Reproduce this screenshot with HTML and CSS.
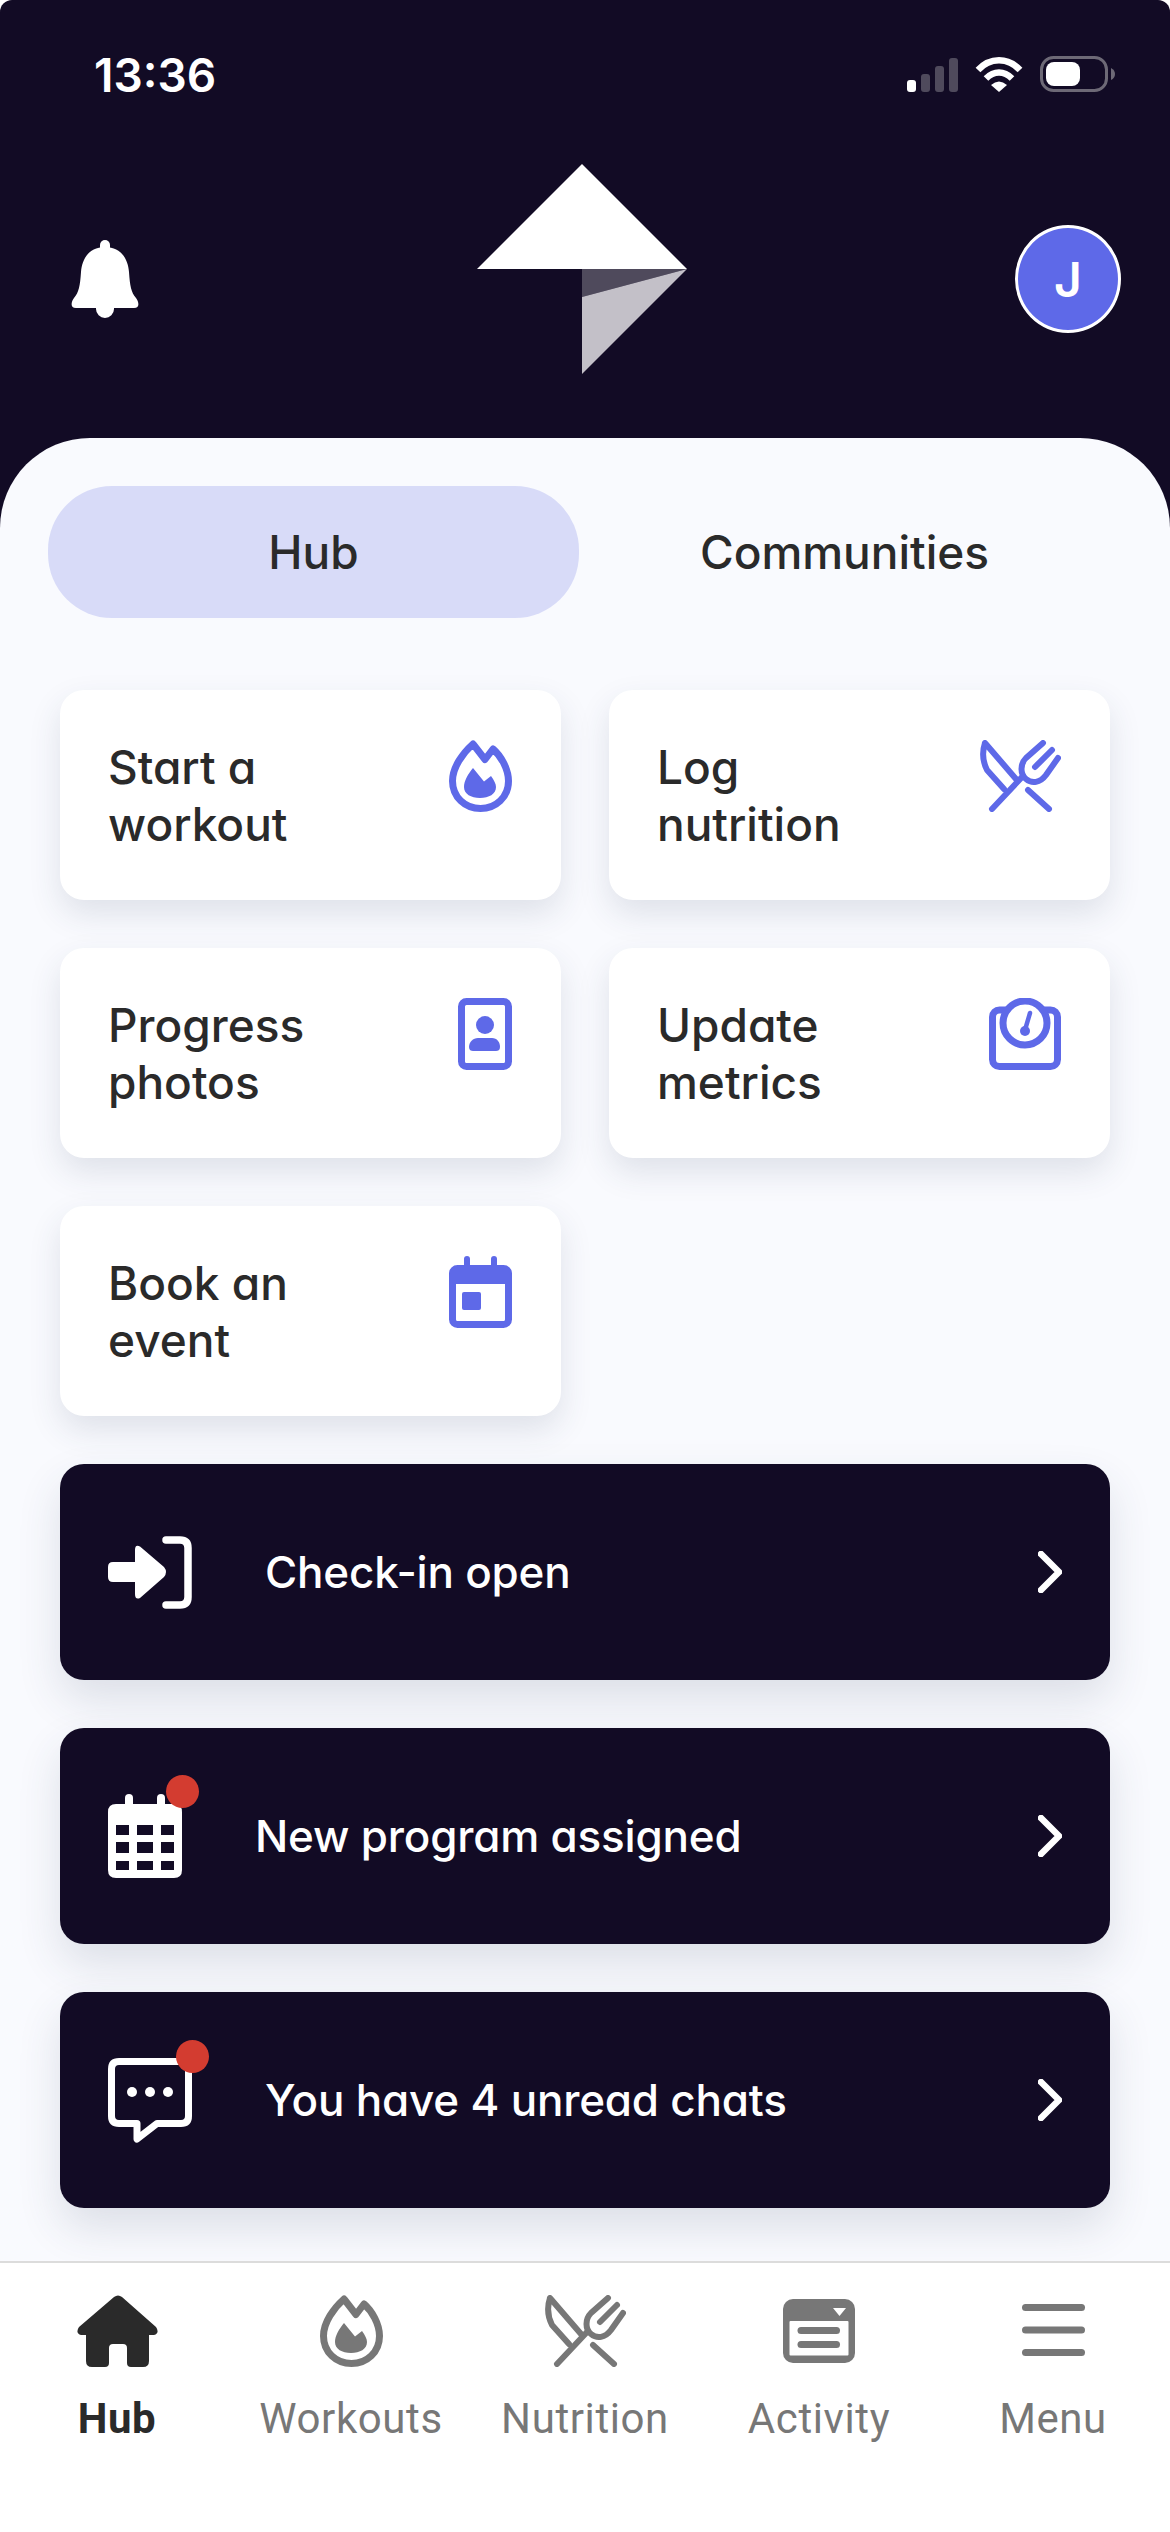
FILE: index.html
```html
<!DOCTYPE html>
<html lang="en">
<head>
<meta charset="utf-8">
<title>Hub</title>
<link rel="stylesheet" href="styles.css">
</head>
<body>
<div class="app">
  <header class="hero">
    <div class="status">
      <span class="time">13:36</span>
      <div class="status-icons">
        <svg width="51" height="34" viewBox="0 0 51 34"><rect y="22" width="9" height="12" rx="3" fill="#fff"/><rect x="14" y="16" width="9" height="18" rx="3" fill="#4f4a5c"/><rect x="28" y="8" width="9" height="26" rx="3" fill="#4f4a5c"/><rect x="42" width="9" height="34" rx="3" fill="#4f4a5c"/></svg>
        <svg width="48" height="36" viewBox="0 0 48 36"><path d="M3 14C15 1 33 1 45 14" fill="none" stroke="#fff" stroke-width="6.5"/><path d="M11 22.500C19 14.500 29 14.500 37 22.500" fill="none" stroke="#fff" stroke-width="6.500"/><path d="M16 29Q24 22 32 29L24 36Z" fill="#fff"/></svg>
        <svg width="75" height="36" viewBox="0 0 75 36"><rect x="1.500" y="1.500" width="65" height="33" rx="12" fill="none" stroke="#6d6976" stroke-width="3"/><rect x="6" y="6" width="34" height="24" rx="8" fill="#fff"/><path d="M71 12Q75 14 75 18Q75 22 71 24Z" fill="#6d6976"/></svg>
      </div>
    </div>
    <div class="brand-row">
      <svg class="bell" width="68" height="78" viewBox="0 0 68 78"><rect x="29" width="10" height="14" rx="5" fill="#fff"/><path d="M34 7C18 7 11 19 10 32C9 46 8 52 3 58C0 62-1 68 5 68H63C69 68 68 62 65 58C60 52 59 46 58 32C57 19 50 7 34 7Z" fill="#fff"/><path d="M25 66H43V69A9 9 0 0 1 25 69Z" fill="#fff"/></svg>
      <svg class="logo" width="210" height="210" viewBox="0 0 210 210"><path d="M105 0L0 105H210Z" fill="#fff"/><path d="M105 105H210L105 133Z" fill="#4f4a5c"/><path d="M105 133L210 105L105 210Z" fill="#c3c0c8"/></svg>
      <div class="avatar">J</div>
    </div>
  </header>

  <main class="sheet">
    <div class="tabs">
      <div class="tab tab-active">Hub</div>
      <div class="tab">Communities</div>
    </div>

    <div class="actions">
      <div class="action">
        <span class="action-label">Start a<br>workout</span>
        <svg class="action-icon" width="63" height="72" viewBox="0 0 63 72"><path class="line" d="M24 4L36 19.500L44 9C52 16 59.500 29 59.500 41C59.500 57 47 68.500 31.500 68.500C16 68.500 3.500 57 3.500 41C3.500 27 14 13 24 4Z"/><path class="solid" d="M24 28L35 41.500L42 36C45 40 47 44 47 47C47 54 40 58 31 58C22 58 15 54 15 47C15 41 19 34 24 28Z"/></svg>
      </div>
      <div class="action">
        <span class="action-label">Log<br>nutrition</span>
        <svg class="action-icon" width="81" height="72" viewBox="0 0 81 72"><g class="line thin"><path d="M5 3C2 12 2 20 7 30L24 49M5 3L36 39"/><path d="M48 50L69 69"/><path d="M12 69L43 36"/><path d="M63 3L46 18C40 24 40 34 46 39C52 44 60 43 66 35L78 18"/><path d="M72 10L55 27"/></g></svg>
      </div>
      <div class="action">
        <span class="action-label">Progress<br>photos</span>
        <svg class="action-icon" width="54" height="72" viewBox="0 0 54 72"><rect class="line" x="3.500" y="3.500" width="47" height="65" rx="5"/><ellipse class="solid" cx="27" cy="27" rx="9" ry="9"/><path class="solid" d="M11 49C11 44 15 40 20 40H34C39 40 42 44 42 49C42 52 40 53 38 53H15C13 53 11 52 11 49Z"/></svg>
      </div>
      <div class="action">
        <span class="action-label">Update<br>metrics</span>
        <svg class="action-icon" width="72" height="72" viewBox="0 0 72 72"><rect class="line" x="3.500" y="12" width="65" height="56.500" rx="7"/><circle class="line fill-white" cx="36" cy="25" r="22"/><path class="line needle" d="M41 15L36 32"/><circle class="solid" cx="36" cy="33" r="5"/></svg>
      </div>
      <div class="action">
        <span class="action-label">Book an<br>event</span>
        <svg class="action-icon" width="63" height="72" viewBox="0 0 63 72"><rect class="solid" x="15" width="6" height="14" rx="3"/><rect class="solid" x="42" width="6" height="14" rx="3"/><rect class="line" x="3.500" y="12.500" width="56" height="56" rx="5"/><rect class="solid" x="3" y="11" width="57" height="17"/><rect class="solid" x="13" y="36" width="19" height="18" rx="2"/></svg>
      </div>
    </div>

    <div class="alerts">
      <div class="alert">
        <span class="alert-icon">
          <svg width="84" height="73" viewBox="0 0 84 73"><path d="M58 4H72Q80 4 80 12V61Q80 69 72 69H58" fill="none" stroke="#fff" stroke-width="7.500" stroke-linecap="round"/><path d="M5 26H27V14Q27 8 32 10.500L56 31Q60 36 56 41L32 62Q27 64 27 58V46H5Q0 46 0 41V31Q0 26 5 26Z" fill="#fff"/></svg>
        </span>
        <span class="alert-text">Check-in open</span>
        <svg class="chev" width="24" height="42" viewBox="0 0 24 42"><path d="M3 3L21 21L3 39" fill="none" stroke="#fff" stroke-width="6.500" stroke-linecap="round" stroke-linejoin="round"/></svg>
      </div>
      <div class="alert">
        <span class="alert-icon">
          <svg width="74" height="84" viewBox="0 0 74 84"><rect x="17" width="8" height="16" rx="4" fill="#fff"/><rect x="49" width="8" height="16" rx="4" fill="#fff"/><path fill="#fff" fill-rule="evenodd" d="M8 10H66Q74 10 74 18V76Q74 84 66 84H8Q0 84 0 76V18Q0 10 8 10ZM8 31V41H21V31ZM29 31V41H45V31ZM53 31V41H66V31ZM8 48V59H21V48ZM29 48V59H45V48ZM53 48V59H66V48ZM8 67V76H21V67ZM29 67V76H45V67ZM53 67V76H66V67Z"/></svg>
          <span class="dot dot-cal"></span>
        </span>
        <span class="alert-text">New program assigned</span>
        <svg class="chev" width="24" height="42" viewBox="0 0 24 42"><path d="M3 3L21 21L3 39" fill="none" stroke="#fff" stroke-width="6.500" stroke-linecap="round" stroke-linejoin="round"/></svg>
      </div>
      <div class="alert">
        <span class="alert-icon">
          <svg width="84" height="85" viewBox="0 0 84 85"><path d="M11 3.500H73Q80.500 3.500 80.500 11V58Q80.500 65.500 73 65.500H49L29 81V65.500H11Q3.500 65.500 3.500 58V11Q3.500 3.500 11 3.500Z" fill="none" stroke="#fff" stroke-width="7" stroke-linejoin="round"/><circle cx="24" cy="34" r="5" fill="#fff"/><circle cx="42" cy="34" r="5" fill="#fff"/><circle cx="60" cy="34" r="5" fill="#fff"/></svg>
          <span class="dot dot-chat"></span>
        </span>
        <span class="alert-text">You have 4 unread chats</span>
        <svg class="chev" width="24" height="42" viewBox="0 0 24 42"><path d="M3 3L21 21L3 39" fill="none" stroke="#fff" stroke-width="6.500" stroke-linecap="round" stroke-linejoin="round"/></svg>
      </div>
    </div>
  </main>

  <nav class="nav">
    <div class="nav-item nav-active">
      <svg width="81" height="72" viewBox="0 0 81 72"><path fill="currentColor" d="M37 2Q41-1 45 2L79 32Q83 38 77 40H72V66Q72 72 66 72H54Q50 72 50 68V53Q50 49 46 49H36Q32 49 32 53V68Q32 72 28 72H15Q9 72 9 66V40H4Q-2 38 2 32Z"/></svg>
      <span>Hub</span>
    </div>
    <div class="nav-item">
      <svg width="63" height="72" viewBox="0 0 63 72"><path fill="none" stroke="currentColor" stroke-width="7" stroke-linejoin="round" d="M24 4L36 19.500L44 9C52 16 59.500 29 59.500 41C59.500 57 47 68.500 31.500 68.500C16 68.500 3.500 57 3.500 41C3.500 27 14 13 24 4Z"/><path fill="currentColor" d="M24 28L35 41.500L42 36C45 40 47 44 47 47C47 54 40 58 31 58C22 58 15 54 15 47C15 41 19 34 24 28Z"/></svg>
      <span>Workouts</span>
    </div>
    <div class="nav-item">
      <svg width="81" height="72" viewBox="0 0 81 72"><g fill="none" stroke="currentColor" stroke-width="6" stroke-linecap="round" stroke-linejoin="round"><path d="M5 3C2 12 2 20 7 30L24 49M5 3L36 39"/><path d="M48 50L69 69"/><path d="M12 69L43 36"/><path d="M63 3L46 18C40 24 40 34 46 39C52 44 60 43 66 35L78 18"/><path d="M72 10L55 27"/></g></svg>
      <span>Nutrition</span>
    </div>
    <div class="nav-item">
      <svg width="81" height="72" viewBox="0 0 81 72"><g transform="translate(4 4)"><rect width="72" height="64" rx="10" fill="currentColor"/><rect x="6.500" y="22" width="59" height="34.500" rx="1" fill="#fff"/><rect x="14.500" y="28" width="42.500" height="7" rx="3.500" fill="currentColor"/><rect x="14.500" y="42" width="42.500" height="7" rx="3.500" fill="currentColor"/><path d="M50 9H63L56.500 17Z" fill="#fff"/></g></svg>
      <span>Activity</span>
    </div>
    <div class="nav-item">
      <svg width="81" height="72" viewBox="0 0 81 72"><g fill="currentColor"><rect x="9" y="9" width="63" height="7" rx="3.500"/><rect x="9" y="31.500" width="63" height="7" rx="3.500"/><rect x="9" y="54" width="63" height="7" rx="3.500"/></g></svg>
      <span>Menu</span>
    </div>
  </nav>
</div>
</body>
</html>
```

FILE: styles.css
```css
* { box-sizing: border-box; }

html, body {
  margin: 0;
  background: #fff;
}

.app {
  width: 1170px;
  height: 2532px;
  display: flex;
  flex-direction: column;
  overflow: hidden;
  background: #120b25;
  border-radius: 12px 12px 0 0;
  font-family: Inter, "Noto Sans", sans-serif;
  font-feature-settings: "cv11" 1;
  color: #2a2a2a;
}

/* Header */
.hero {
  height: 438px;
  flex: none;
  color: #fff;
}

.status {
  display: flex;
  justify-content: space-between;
  align-items: flex-start;
  height: 92px;
  padding: 56px 55px 0 94px;
}

.time {
  font-size: 46px;
  font-weight: 600;
  line-height: 38px;
}

.status-icons {
  display: flex;
  align-items: flex-end;
  gap: 17px;
}

.brand-row {
  display: flex;
  align-items: flex-start;
  margin-top: 72px;
  padding: 0 49px 0 71px;
}

.bell { margin-top: 76px; }
.logo { margin-left: 338px; }

.avatar {
  width: 106px;
  height: 108px;
  margin: 61px 0 0 auto;
  border: 3px solid #fff;
  border-radius: 50%;
  background: #5e69e8;
  display: flex;
  align-items: center;
  justify-content: center;
  font-size: 48px;
  font-weight: 600;
}

/* Sheet */
.sheet {
  flex: 1;
  padding: 48px 48px 0;
  background: #f9fafe;
  border-radius: 90px 90px 0 0;
}

.tabs {
  display: grid;
  grid-template-columns: 531px 531px;
  height: 132px;
}

.tab {
  display: flex;
  align-items: center;
  justify-content: center;
  border-radius: 64px;
  font-size: 46px;
  font-weight: 500;
}

.tab-active { background: #d8dbf8; }

.actions {
  display: grid;
  grid-template-columns: 501px 501px;
  grid-auto-rows: 210px;
  gap: 48px;
  margin: 72px 12px 0;
}

.action {
  display: flex;
  justify-content: space-between;
  align-items: flex-start;
  padding: 49px 49px 0 48px;
  background: #fff;
  border-radius: 24px;
  box-shadow: 0 14px 32px rgba(50, 65, 95, .13);
}

.action-label {
  font-size: 46px;
  font-weight: 500;
  line-height: 57px;
}

.action-icon { margin-top: 1px; }

.line {
  fill: none;
  stroke: #5e69e8;
  stroke-width: 7;
  stroke-linejoin: round;
}

.thin {
  stroke-width: 6;
  stroke-linecap: round;
}

.needle {
  stroke-width: 4.5;
  stroke-linecap: round;
}

.fill-white { fill: #fff; }
.solid { fill: #5e69e8; }

/* Alert rows */
.alerts {
  display: flex;
  flex-direction: column;
  gap: 48px;
  margin: 48px 12px 0;
}

.alert {
  display: flex;
  align-items: center;
  height: 216px;
  padding: 0 48px;
  background: #120b25;
  border-radius: 24px;
  color: #fff;
  box-shadow: 0 20px 44px rgba(50, 65, 95, .14);
}

.alert-icon {
  position: relative;
  display: flex;
  margin-right: 73px;
}

.alert-text {
  flex: 1;
  font-size: 44px;
  font-weight: 500;
  letter-spacing: -.2px;
}

.dot {
  position: absolute;
  width: 33px;
  height: 33px;
  border-radius: 50%;
  background: #d33c30;
}

.dot-cal { left: 58px; top: -19px; }
.dot-chat { left: 68px; top: -18px; }

/* Bottom nav */
.nav {
  flex: none;
  height: 271px;
  display: grid;
  grid-template-columns: repeat(5, 234px);
  padding-top: 32px;
  background: #fff;
  border-top: 2px solid #dcdcdc;
  color: #777;
  font-family: Roboto, sans-serif;
  font-feature-settings: normal;
}

.nav-item {
  display: flex;
  flex-direction: column;
  align-items: center;
  gap: 27px;
  font-size: 42px;
  line-height: 49px;
  letter-spacing: .6px;
}

.nav-active {
  color: #2a2a2a;
  font-weight: 700;
}
```
